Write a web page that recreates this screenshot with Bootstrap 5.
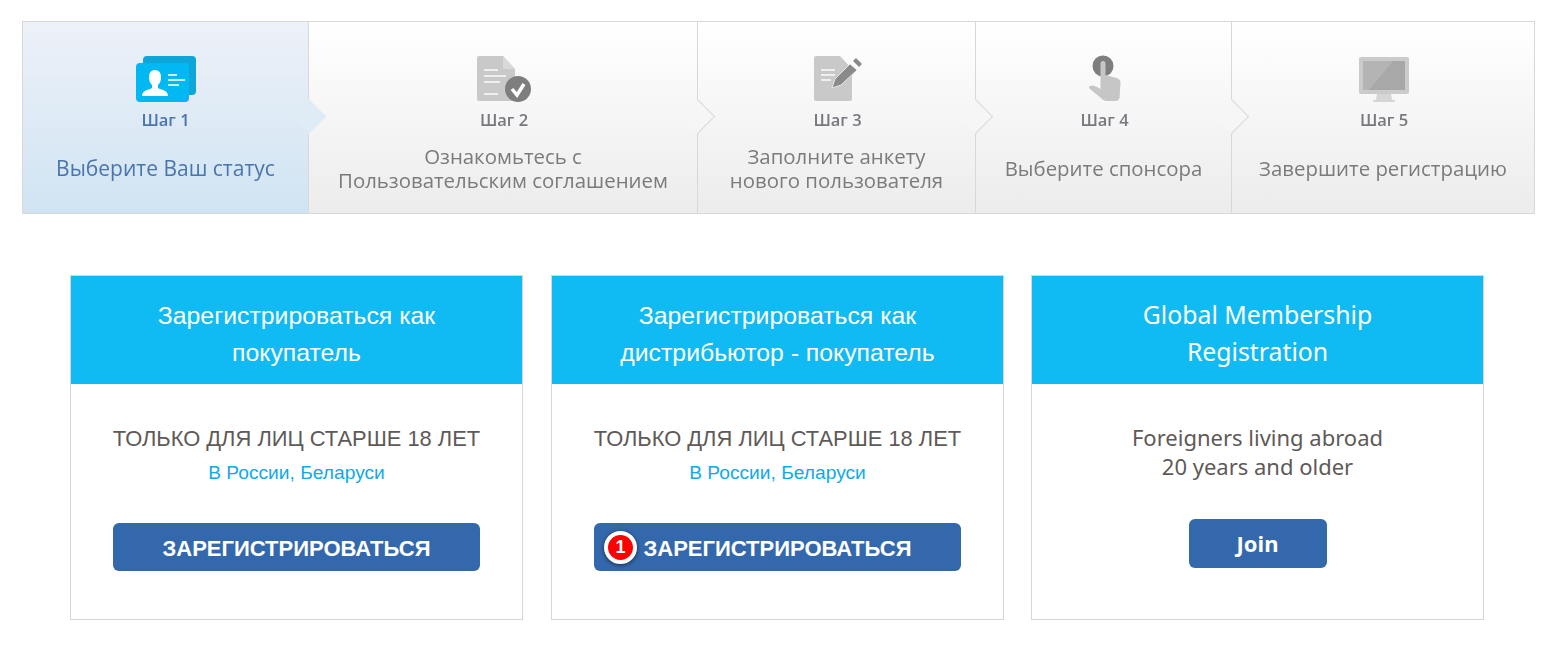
<!DOCTYPE html>
<html lang="ru">
<head>
    <meta charset="UTF-8">
    <title>Регистрация</title>
    <link href="https://cdn.jsdelivr.net/npm/bootstrap@5.3.2/dist/css/bootstrap.min.css" rel="stylesheet">
    <style>
        body { background: #fff; font-family: "Liberation Sans", Arial, sans-serif; }
        .page-box { padding: 21px 23px 0 22px; }
        /* steps */
        .steps-bar { border: 1px solid #d8d8d8; height: 193px; }
        .step-item {
            position: relative;
            flex: none;
            text-align: center;
            font-family: "Open Sans", sans-serif;
            color: #7b7b7b;
            background: linear-gradient(#fff, #ececec);
            border-left: 1px solid #d8d8d8;
            padding-top: 33px;
        }
        .step-item svg { display: block; margin: 0 auto; height: 48px; filter: blur(.3px); }
        .step-item:not(.step-on) svg { transform: translateX(1px); }
        .step-item:first-child { border-left: 0; }
        .step-w1 { width: 285px; }
        .step-w2 { width: 389px; }
        .step-w3 { width: 278px; }
        .step-w4 { width: 256px; }
        .step-w5 { width: 303px; }
        .step-on { background: linear-gradient(#edf1f8, #d0e4f3); color: #4a74ad; }
        .step-num { font-size: 16.5px; font-weight: 600; line-height: 20px; margin-top: 7px; color: #77777f; filter: blur(.3px); }
        .step-item:not(.step-on) .step-num { padding-left: 2px; }
        .step-on .step-num { color: #4a74ad; }
        .step-label { font-size: 20.4px; line-height: 24.5px; height: 72px; padding-top: 4px; filter: blur(.3px); }
        .step-on .step-label { font-size: 21px; }
        /* стрелка между шагами */
        .step-arrow {
            position: absolute;
            right: -13px;
            top: 82px;
            width: 25px;
            height: 25px;
            transform: rotate(45deg);
            background: #f6f6f6;
            border-top: 1px solid #d8d8d8;
            border-right: 1px solid #d8d8d8;
            z-index: 2;
        }
        .step-on .step-arrow { background: #dfebf5; border-color: #dfebf5; }
        /* cards */
        .plans-row { margin-top: 61px; padding: 0 51px 0 48px; gap: 28px; }
        .plan-box { width: 453px; height: 345px; border: 1px solid #d6d6d6; border-radius: 0; text-align: center; flex: none; }
        .plan-box:last-child { margin-left: -1px; }
        .plan-head {
            background: #10baf2;
            color: #fff;
            height: 108px;
            font-size: 24.8px;
            line-height: 37px;
            padding-top: 21px;
        }
        .plan-head.noto-font { padding-top: 20px; }
        .plan-title { font-size: 21.9px; color: #5e5a58; line-height: 26px; margin-top: 42px; }
        .plan-sub { font-size: 19.2px; color: #10a9ea; line-height: 22px; margin-top: 10px; }
        .plan-btn {
            background: #3468ad;
            color: #fff;
            font-size: 22px;
            font-weight: 700;
            width: 367px;
            height: 48px;
            line-height: 52px;
            padding: 0;
            margin-top: 39px;
            border: 0;
            border-radius: 6px;
            position: relative;
        }
        .plan-btn:hover { background: #2d5c9a; color: #fff; }
        .num-badge {
            position: absolute;
            left: 10px;
            top: 8px;
            width: 33px;
            height: 33px;
            line-height: 25px;
            border: 4px solid #fff;
            border-radius: 50%;
            background: #f00;
            color: #fff;
            font-size: 18px;
            font-weight: 700;
            text-align: center;
            box-shadow: 0 1px 4px rgba(0,0,0,.6);
        }
        .noto-font { font-family: "Noto Sans", sans-serif; }
        .plan-title.noto-font { font-size: 22px; line-height: 29px; margin-top: 39px; }
        .join-btn { width: 138px; height: 49px; font-size: 22px; line-height: 49px; margin-top: 38px; }
    </style>
</head>
<body>

<div class="page-box">
    <!-- шаги -->
    <div class="steps-bar d-flex">
        <div class="step-item step-w1 step-on">
            <svg width="62" height="48" viewBox="0 0 62 48">
                <rect x="8" y="1" width="53" height="39" rx="4" fill="#0ea5d8"/>
                <rect x="1" y="8" width="53" height="39" rx="4" fill="#02b8f3"/>
                <path d="M7 41c0-6 7-6 10-8v-3c-2-2-3-4-3-8 0-4 2-7 6-7s6 3 6 7c0 4-1 6-3 8v3c3 2 10 2 10 8z" fill="#fff"/>
                <path d="M33 20h9M33 25h17M33 30h11" stroke="#c8eefc" stroke-width="2" fill="none"/>
            </svg>
            <div class="step-num">Шаг 1</div>
            <div class="step-label d-flex align-items-center justify-content-center"><div>Выберите Ваш статус</div></div>
            <span class="step-arrow"></span>
        </div>
        <div class="step-item step-w2">
            <svg width="56" height="48" viewBox="0 0 56 48">
                <path d="M1 3q0-2 2-2h24l12 13v32H3q-2 0-2-2z" fill="#c9c9c9"/>
                <path d="M27 1l12 13H27z" fill="#d9d9d9"/>
                <path d="M8 15h14M8 21h22M8 27h16M8 39h14" stroke="#efefef" stroke-width="2" fill="none"/>
                <circle cx="42" cy="34" r="13" fill="#7e7e7e"/>
                <path d="M36 34l5 6 7-11" stroke="#fff" stroke-width="3.500" fill="none"/>
            </svg>
            <div class="step-num">Шаг 2</div>
            <div class="step-label d-flex align-items-center justify-content-center"><div>Ознакомьтесь с<br>Пользовательским соглашением</div></div>
            <span class="step-arrow"></span>
        </div>
        <div class="step-item step-w3">
            <svg width="50" height="48" viewBox="0 0 50 48">
                <path d="M1 3q0-2 2-2h24l12 13v30q0 2-2 2H3q-2 0-2-2z" fill="#c9c9c9"/>
                <path d="M8 15h14M8 20h14M8 25h10" stroke="#efefef" stroke-width="2" fill="none"/>
                <path d="M19 33l3-9 15-15 7 6-16 15z" fill="#8a8a8a" stroke="#e4e4e4"/>
                <path d="M40 6l3-3 6 6-3 3z" fill="#8a8a8a"/>
            </svg>
            <div class="step-num">Шаг 3</div>
            <div class="step-label d-flex align-items-center justify-content-center"><div>Заполните анкету<br>нового пользователя</div></div>
            <span class="step-arrow"></span>
        </div>
        <div class="step-item step-w4">
            <svg width="34" height="48" viewBox="0 0 34 48">
                <circle cx="15" cy="11" r="10.500" fill="#7e7e7e"/>
                <path d="M12.500 9q0-3 2.500-3t2.500 3v11l11 3q4 1 4 5l-1 15q-1 3-3 3H18q-3 0-5-3l-11-9q-2-2 0-3t5 0l5.500 3z" fill="#c6c6c6"/>
            </svg>
            <div class="step-num">Шаг 4</div>
            <div class="step-label d-flex align-items-center justify-content-center"><div>Выберите спонсора</div></div>
            <span class="step-arrow"></span>
        </div>
        <div class="step-item step-w5">
            <svg width="52" height="48" viewBox="0 0 52 48">
                <rect x="1" y="2" width="50" height="37" rx="2" fill="#cbcbcb"/>
                <rect x="5" y="6" width="42" height="29" fill="#a8a8a8"/>
                <path d="M5 6h30L11 35H5z" fill="#b4b4b4"/>
                <path d="M19 39h14l1 6h3v2H15v-2h3z" fill="#d6d6d6"/>
            </svg>
            <div class="step-num">Шаг 5</div>
            <div class="step-label d-flex align-items-center justify-content-center"><div>Завершите регистрацию</div></div>
        </div>
    </div>

    <!-- карточки -->
    <div class="plans-row d-flex">
        <div class="plan-box">
            <div class="plan-head">Зарегистрироваться как<br>покупатель</div>
            <div class="plan-title">ТОЛЬКО ДЛЯ ЛИЦ СТАРШЕ 18 ЛЕТ</div>
            <div class="plan-sub">В России, Беларуси</div>
            <a href="#" class="btn plan-btn">ЗАРЕГИСТРИРОВАТЬСЯ</a>
        </div>
        <div class="plan-box">
            <div class="plan-head">Зарегистрироваться как<br>дистрибьютор - покупатель</div>
            <div class="plan-title">ТОЛЬКО ДЛЯ ЛИЦ СТАРШЕ 18 ЛЕТ</div>
            <div class="plan-sub">В России, Беларуси</div>
            <a href="#" class="btn plan-btn"><span class="num-badge">1</span>ЗАРЕГИСТРИРОВАТЬСЯ</a>
        </div>
        <div class="plan-box">
            <div class="plan-head noto-font">Global Membership<br>Registration</div>
            <div class="plan-title noto-font">Foreigners living abroad<br>20 years and older</div>
            <a href="#" class="btn plan-btn join-btn noto-font">Join</a>
        </div>
    </div>
</div>

<script src="https://cdn.jsdelivr.net/npm/bootstrap@5.3.2/dist/js/bootstrap.bundle.min.js"></script>
</body>
</html>
